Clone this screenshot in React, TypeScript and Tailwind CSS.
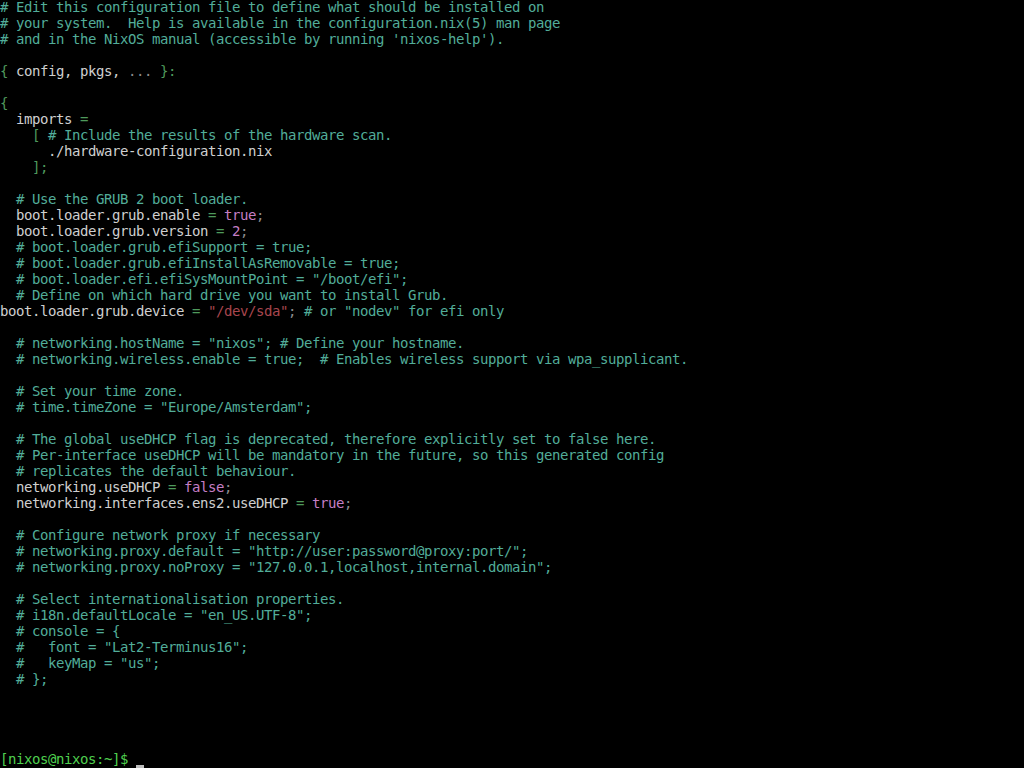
type Seg = [string, string]

const C = 'text-[#52ad99]' // comment
const T = 'text-[#cfcfcf]' // plain
const O = 'text-[#4f9a5c]' // operator / bracket
const P = 'text-[#8c8c8c]' // punctuation
const K = 'text-[#c57ec5]' // literal
const S = 'text-[#a8464e]' // string

const lines: Seg[][] = [
  [['# Edit this configuration file to define what should be installed on', C]],
  [['# your system.  Help is available in the configuration.nix(5) man page', C]],
  [["# and in the NixOS manual (accessible by running 'nixos-help').", C]],
  [],
  [['{ ', O], ['config, pkgs, ', T], ['... ', P], ['}:', O]],
  [],
  [['{', O]],
  [['  imports ', T], ['=', O]],
  [['    [ ', O], ['# Include the results of the hardware scan.', C]],
  [['      ./hardware-configuration.nix', T]],
  [['    ];', O]],
  [],
  [['  # Use the GRUB 2 boot loader.', C]],
  [['  boot.loader.grub.enable ', T], ['= ', O], ['true', K], [';', P]],
  [['  boot.loader.grub.version ', T], ['= ', O], ['2', K], [';', P]],
  [['  # boot.loader.grub.efiSupport = true;', C]],
  [['  # boot.loader.grub.efiInstallAsRemovable = true;', C]],
  [['  # boot.loader.efi.efiSysMountPoint = "/boot/efi";', C]],
  [['  # Define on which hard drive you want to install Grub.', C]],
  [['boot.loader.grub.device ', T], ['= ', O], ['"/dev/sda"', S], ['; ', P], ['# or "nodev" for efi only', C]],
  [],
  [['  # networking.hostName = "nixos"; # Define your hostname.', C]],
  [['  # networking.wireless.enable = true;  # Enables wireless support via wpa_supplicant.', C]],
  [],
  [['  # Set your time zone.', C]],
  [['  # time.timeZone = "Europe/Amsterdam";', C]],
  [],
  [['  # The global useDHCP flag is deprecated, therefore explicitly set to false here.', C]],
  [['  # Per-interface useDHCP will be mandatory in the future, so this generated config', C]],
  [['  # replicates the default behaviour.', C]],
  [['  networking.useDHCP ', T], ['= ', O], ['false', K], [';', P]],
  [['  networking.interfaces.ens2.useDHCP ', T], ['= ', O], ['true', K], [';', P]],
  [],
  [['  # Configure network proxy if necessary', C]],
  [['  # networking.proxy.default = "http://user:password@proxy:port/";', C]],
  [['  # networking.proxy.noProxy = "127.0.0.1,localhost,internal.domain";', C]],
  [],
  [['  # Select internationalisation properties.', C]],
  [['  # i18n.defaultLocale = "en_US.UTF-8";', C]],
  [['  # console = {', C]],
  [['  #   font = "Lat2-Terminus16";', C]],
  [['  #   keyMap = "us";', C]],
  [['  # };', C]],
  [],
  [],
  [],
  [],
]

export default function App() {
  return (
    <div className="w-[1024px] h-[768px] overflow-hidden bg-black font-['DejaVu_Sans_Mono',monospace] text-[14px] tracking-[-0.43px]">
      {lines.map((segs, i) => (
        <div key={i} className="h-4 leading-[14px] whitespace-pre">
          {segs.map(([txt, cls], j) => (
            <span key={j} className={cls}>{txt}</span>
          ))}
        </div>
      ))}
      <div className="h-4 whitespace-pre flex">
        <span className="leading-[14px] text-[#4fd04f]">[nixos@nixos:~]$ </span>
        <span className="inline-block w-2 h-[3px] mt-[13px] bg-[#bdbdbd]" />
      </div>
    </div>
  )
}
